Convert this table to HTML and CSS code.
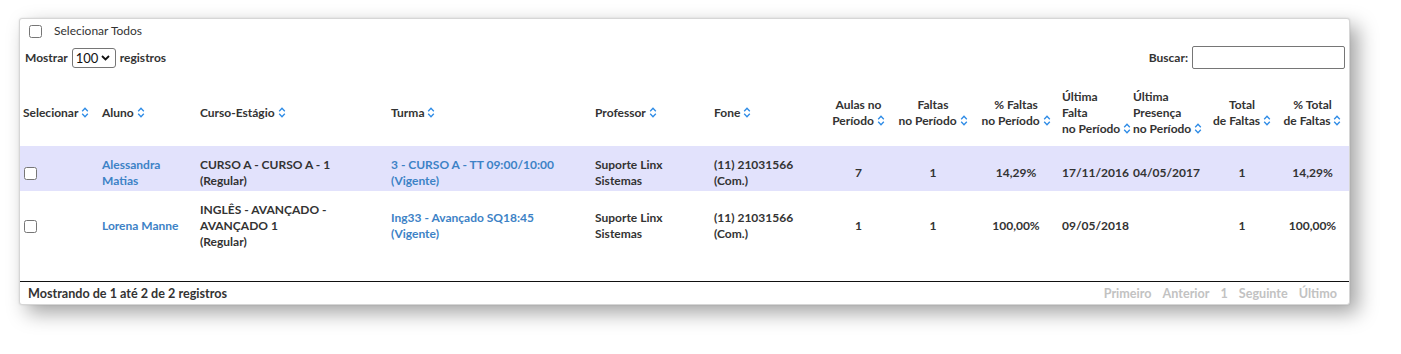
FILE: index.html
```html
<!DOCTYPE html>
<html lang="pt-BR">
<head>
<meta charset="utf-8">
<title>Faltas</title>
<link rel="stylesheet" href="styles.css">
</head>
<body>
<svg width="0" height="0" class="defs" aria-hidden="true">
  <symbol id="sort" viewBox="0 0 8 11">
    <polyline points="1.2,4.3 4,1.3 6.8,4.3" fill="none" stroke="#2d8be6" stroke-width="1.3"/>
    <polyline points="1.2,6.7 4,9.7 6.8,6.7" fill="none" stroke="#2d8be6" stroke-width="1.3"/>
  </symbol>
</svg>
<div class="page">
<div class="card">
  <div class="selall">
    <input type="checkbox" class="chk">
    <span class="selall-label">Selecionar Todos</span>
  </div>
  <div class="controls">
    <label class="length">Mostrar
      <span class="selwrap">
        <select class="sel"><option>100</option></select>
        <svg class="chev" viewBox="0 0 9 6" aria-hidden="true"><polyline points="1,1 4.5,4.5 8,1" fill="none" stroke="#111" stroke-width="1.8"/></svg>
      </span>
      registros</label>
    <label class="search">Buscar: <input type="text" class="search-input"></label>
  </div>
  <table class="grid">
    <colgroup>
      <col style="width:79px"><col style="width:98px"><col style="width:191px"><col style="width:204px">
      <col style="width:119px"><col style="width:113px"><col style="width:69px"><col style="width:80px">
      <col style="width:86px"><col style="width:71px"><col style="width:78px"><col style="width:68px">
      <col style="width:73px">
    </colgroup>
    <thead>
      <tr>
        <th>Selecionar <svg class="ic"><use href="#sort"/></svg></th>
        <th>Aluno <svg class="ic"><use href="#sort"/></svg></th>
        <th>Curso-Estágio <svg class="ic"><use href="#sort"/></svg></th>
        <th>Turma <svg class="ic"><use href="#sort"/></svg></th>
        <th>Professor <svg class="ic"><use href="#sort"/></svg></th>
        <th>Fone <svg class="ic"><use href="#sort"/></svg></th>
        <th class="c">Aulas no<br>Período <svg class="ic"><use href="#sort"/></svg></th>
        <th class="c">Faltas<br>no Período <svg class="ic"><use href="#sort"/></svg></th>
        <th class="c">% Faltas<br>no Período <svg class="ic"><use href="#sort"/></svg></th>
        <th>Última<br>Falta<br>no Período <svg class="ic"><use href="#sort"/></svg></th>
        <th>Última<br>Presença<br>no Período <svg class="ic"><use href="#sort"/></svg></th>
        <th class="c">Total<br>de Faltas <svg class="ic"><use href="#sort"/></svg></th>
        <th class="c">% Total<br>de Faltas <svg class="ic"><use href="#sort"/></svg></th>
      </tr>
    </thead>
    <tbody>
      <tr class="hl">
        <td class="chkcell"><input type="checkbox" class="chk"></td>
        <td><a class="lnk">Alessandra<br>Matias</a></td>
        <td>CURSO A - CURSO A - 1<br>(Regular)</td>
        <td><a class="lnk">3 - CURSO A - TT 09:00/10:00<br>(Vigente)</a></td>
        <td>Suporte Linx<br>Sistemas</td>
        <td>(11) 21031566<br>(Com.)</td>
        <td class="c">7</td>
        <td class="c">1</td>
        <td class="c">14,29%</td>
        <td>17/11/2016</td>
        <td>04/05/2017</td>
        <td class="c">1</td>
        <td class="c">14,29%</td>
      </tr>
      <tr>
        <td class="chkcell"><input type="checkbox" class="chk"></td>
        <td><a class="lnk">Lorena Manne</a></td>
        <td>INGLÊS - AVANÇADO -<br>AVANÇADO 1<br>(Regular)</td>
        <td><a class="lnk">Ing33 - Avançado SQ18:45<br>(Vigente)</a></td>
        <td>Suporte Linx<br>Sistemas</td>
        <td>(11) 21031566<br>(Com.)</td>
        <td class="c">1</td>
        <td class="c">1</td>
        <td class="c">100,00%</td>
        <td>09/05/2018</td>
        <td></td>
        <td class="c">1</td>
        <td class="c">100,00%</td>
      </tr>
    </tbody>
  </table>
  <div class="footer">
    <div class="info">Mostrando de 1 até 2 de 2 registros</div>
    <div class="pager">
      <span>Primeiro</span><span>Anterior</span><span>1</span><span>Seguinte</span><span>Último</span>
    </div>
  </div>
</div>
</div>
</body>
</html>
```
FILE: styles.css
```css
html, body {
  margin: 0;
  padding: 0;
  background: #ffffff;
}
body {
  font-family: Lato, "Liberation Sans", sans-serif;
  font-size: 12px;
  line-height: 16px;
  color: #333333;
}
.page {
  min-height: 354px;
  padding: 18px 0 0 19px;
  box-sizing: border-box;
}
.defs {
  position: absolute;
  width: 0;
  height: 0;
}
.card {
  width: 1329px;
  border: 1px solid #d6d6d6;
  border-radius: 3px;
  background: #ffffff;
  box-shadow: 0 0 2px rgba(0, 0, 0, 0.12), 8px 8px 20px rgba(0, 0, 0, 0.36);
}
.selall {
  display: flex;
  align-items: center;
  padding: 4px 0 0 9px;
  height: 16px;
}
.chk {
  margin: 0;
  width: 13px;
  height: 13px;
}
.selall-label {
  margin-left: 12px;
  font-weight: 400;
}
.controls {
  margin-top: 7px;
  height: 23px;
  display: flex;
  align-items: center;
  justify-content: space-between;
  padding: 0 4px 0 5px;
  font-weight: 700;
}
.length, .search {
  display: flex;
  align-items: center;
  gap: 4px;
}
.selwrap {
  position: relative;
  display: block;
  width: 44px;
  height: 20px;
}
.sel {
  appearance: none;
  -webkit-appearance: none;
  display: block;
  width: 44px;
  height: 20px;
  box-sizing: border-box;
  font-family: Lato, "Liberation Sans", sans-serif;
  font-size: 13px;
  font-weight: 400;
  border: 1px solid #767676;
  border-radius: 3px;
  padding: 0 0 0 3px;
  margin: 0;
  background: #fff;
  color: #111;
}
.chev {
  position: absolute;
  right: 6px;
  top: 7px;
  width: 9px;
  height: 6px;
  pointer-events: none;
}
.search-input {
  width: 153px;
  height: 23px;
  box-sizing: border-box;
  border: 1px solid #767676;
  border-radius: 2px;
  margin: 0;
  padding: 0 3px;
}
.grid {
  margin-top: 11px;
  width: 1329px;
  table-layout: fixed;
  border-collapse: collapse;
  font-weight: 700;
}
.grid th {
  padding: 9px 3px;
  text-align: left;
  vertical-align: middle;
  white-space: nowrap;
  font-weight: 700;
}
.grid td {
  padding: 11px 3px 2px 3px;
  vertical-align: middle;
  white-space: nowrap;
}
.grid .c {
  text-align: center;
}
.grid td.chkcell {
  padding-left: 4px;
}
.chkcell .chk {
  display: block;
}
.hl td {
  background: #e2e2fc;
}
.lnk {
  color: #3d82c6;
  text-decoration: none;
}
.ic {
  width: 8px;
  height: 11px;
  vertical-align: -1px;
}
.footer {
  margin-top: 29px;
  border-top: 1px solid #111111;
  padding: 4px 12px 2px 8px;
  display: flex;
  justify-content: space-between;
  font-weight: 700;
  font-size: 12.6px;
}
.pager {
  display: flex;
  gap: 11px;
  color: #c2c2c2;
}
```
